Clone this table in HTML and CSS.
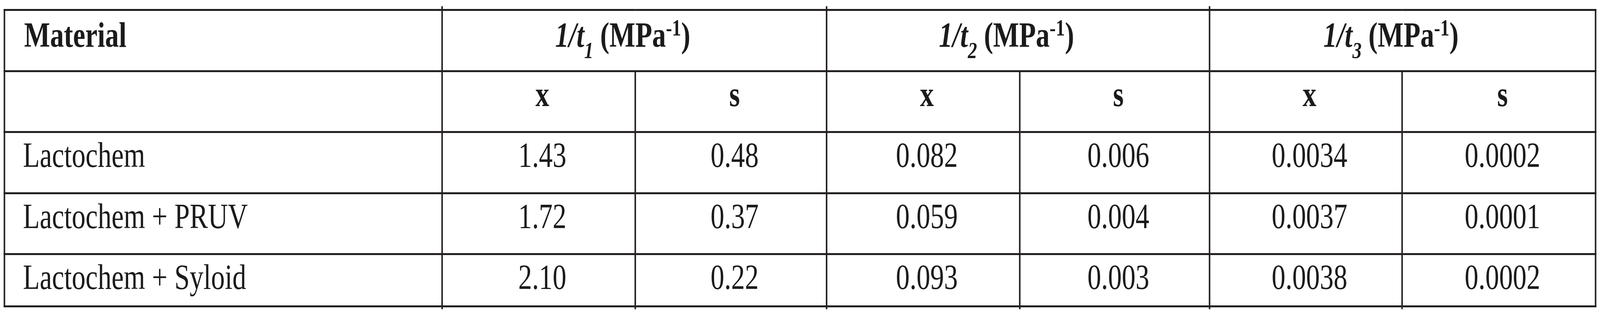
FILE: index.html
```html
<!DOCTYPE html>
<html lang="en">
<head>
<meta charset="utf-8">
<title>Table</title>
<link rel="stylesheet" href="styles.css">
</head>
<body>
<div class="frame">
<div class="page">
<table class="data">
  <colgroup>
    <col class="c-mat">
    <col class="c-x1">
    <col class="c-s1">
    <col class="c-x2">
    <col class="c-s2">
    <col class="c-x3">
    <col class="c-s3">
  </colgroup>
  <thead>
    <tr class="r-h1">
      <th class="mat">Material</th>
      <th class="grp ext-top" colspan="2"><i>1/t<sub>1</sub></i> (MPa<sup>-1</sup>)</th>
      <th class="grp ext-top" colspan="2"><i>1/t<sub>2</sub></i> (MPa<sup>-1</sup>)</th>
      <th class="grp ext-top" colspan="2"><i>1/t<sub>3</sub></i> (MPa<sup>-1</sup>)</th>
    </tr>
    <tr class="r-h2">
      <th class="mat"></th>
      <th>x</th>
      <th>s</th>
      <th>x</th>
      <th>s</th>
      <th>x</th>
      <th>s</th>
    </tr>
  </thead>
  <tbody>
    <tr class="r-d1">
      <td class="mat">Lactochem</td>
      <td>1.43</td>
      <td>0.48</td>
      <td>0.082</td>
      <td>0.006</td>
      <td>0.0034</td>
      <td>0.0002</td>
    </tr>
    <tr class="r-d2">
      <td class="mat">Lactochem + PRUV</td>
      <td>1.72</td>
      <td>0.37</td>
      <td>0.059</td>
      <td>0.004</td>
      <td>0.0037</td>
      <td>0.0001</td>
    </tr>
    <tr class="r-last">
      <td class="mat">Lactochem + Syloid</td>
      <td class="ext-bot">2.10</td>
      <td class="ext-bot">0.22</td>
      <td class="ext-bot">0.093</td>
      <td class="ext-bot">0.003</td>
      <td class="ext-bot">0.0038</td>
      <td class="ext-bot">0.0002</td>
    </tr>
  </tbody>
</table>
</div>
</div>
</body>
</html>
```

FILE: styles.css
```css
html, body {
  margin: 0;
  padding: 0;
  background: #ffffff;
  overflow: hidden;
}

body {
  font-family: "Liberation Serif", "Times New Roman", serif;
  color: #1c1a1b;
}

/* Clips the unscaled layout box so nothing overflows the viewport. */
.frame {
  width: 100vw;
  height: 100vh;
  overflow: hidden;
}

/* The table is drawn at the reference's 5235px design width and
   fitted horizontally into the 4096px-wide viewport. */
.page {
  width: 5235px;
  padding: 23px 0 0 12px;
  box-sizing: border-box;
  transform: scaleX(0.78243);
  transform-origin: 0 0;
}

.data {
  border-collapse: collapse;
  table-layout: fixed;
  width: 5206px;
  font-size: 90px;
  line-height: 90px;
}

.c-mat { width: 1432px; }
.c-x1 { width: 632px; }
.c-s1 { width: 626px; }
.c-x2 { width: 632px; }
.c-s2 { width: 621px; }
.c-x3 { width: 630px; }
.c-s3 { width: 633px; }

.data th,
.data td {
  border: 5px solid #231f20;
  padding: 12px 0 0 24px;
  vertical-align: top;
  text-align: center;
  white-space: nowrap;
}

.data th {
  font-weight: bold;
}

.data td {
  font-weight: normal;
}

.data td.mat {
  text-align: left;
  padding-left: 58px;
}

.data th.mat {
  text-align: left;
  padding-left: 62px;
}

.r-h1 { height: 157px; }
.r-h2 { height: 156px; }
.r-d1 { height: 157px; }
.r-d2 { height: 156px; }
.r-last { height: 134px; }

.r-h1 th {
  padding-top: 17px;
}

.data .grp {
  padding-left: 0;
  padding-right: 76px;
}

.data sub,
.data sup {
  font-size: 60px;
  line-height: 0;
}

.data sub {
  vertical-align: -29px;
}

.data sup {
  vertical-align: 29px;
  font-style: normal;
}

.ext-top,
.ext-bot {
  position: relative;
}

.ext-top::before {
  content: "";
  position: absolute;
  left: -5px;
  top: -12px;
  width: 5px;
  height: 10px;
  background: #231f20;
}

.ext-bot::after {
  content: "";
  position: absolute;
  left: -5px;
  bottom: -10px;
  width: 5px;
  height: 9px;
  background: #231f20;
}
```
